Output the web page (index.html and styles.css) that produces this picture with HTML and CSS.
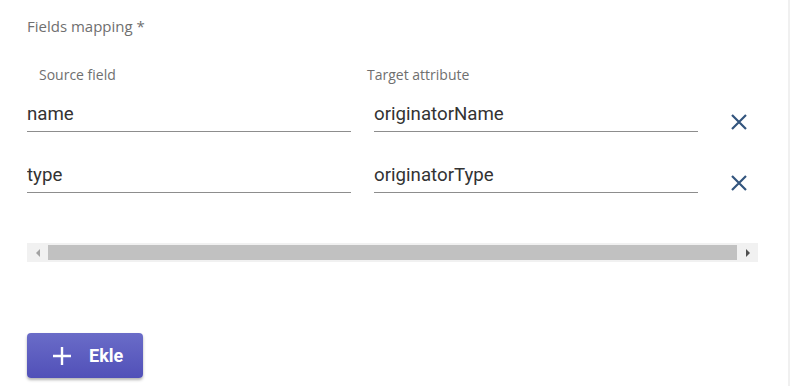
FILE: index.html
```html
<!DOCTYPE html>
<html lang="en">
  <head>
    <meta charset="UTF-8">
    <title>Fields mapping</title>
    <link rel="stylesheet" href="styles.css">
  </head>
  <body>
    <div id="page">
      <div id="form">
        <div class="field-label">Fields mapping *</div>
        <div class="mapping">
          <div class="mapping-head">
            <span class="col-label source">Source field</span>
            <span class="col-label target">Target attribute</span>
          </div>
          <div class="mapping-row">
            <input type="text" class="map-input" value="name">
            <input type="text" class="map-input" value="originatorName">
            <button class="remove" title="Remove">
              <svg width="18" height="18" viewBox="0 0 18 18"><path d="M2 2L16 16M16 2L2 16" stroke="#33557e" stroke-width="2.2" fill="none"/></svg>
            </button>
          </div>
          <div class="mapping-row">
            <input type="text" class="map-input" value="type">
            <input type="text" class="map-input" value="originatorType">
            <button class="remove" title="Remove">
              <svg width="18" height="18" viewBox="0 0 18 18"><path d="M2 2L16 16M16 2L2 16" stroke="#33557e" stroke-width="2.2" fill="none"/></svg>
            </button>
          </div>
        </div>
        <div class="hscroll">
          <span class="arrow left"></span>
          <span class="thumb"></span>
          <span class="arrow right"></span>
        </div>
        <button class="add">
          <svg width="18" height="18" viewBox="0 0 18 18"><path d="M9 0V18M0 9H18" stroke="#fff" stroke-width="2.4" fill="none"/></svg>
          <span>Ekle</span>
        </button>
      </div>
      <div id="edge"></div>
    </div>
  </body>
</html>
```

FILE: styles.css
```css
html, body {
    margin: 0;
    padding: 0;
    background: #fff;
}
#page {
    display: flex;
    height: 386px;
}
#form {
    flex: 1;
    padding: 16px 0 0 27px;
    font-family: "Open Sans", Arial, sans-serif;
}
#edge {
    width: 2px;
    background: #f0f0f0;
}
.field-label {
    font-size: 15px;
    color: #6f6f6f;
    line-height: 20px;
}
.mapping {
    margin-top: 30px;
}
.mapping-head {
    display: grid;
    grid-template-columns: 324px 324px;
    column-gap: 16px;
    font-size: 14px;
    color: #6f6f6f;
    line-height: 18px;
}
.col-label.source {
    padding-left: 12px;
}
.mapping-row {
    display: flex;
    align-items: flex-end;
    margin-top: 19px;
}
.mapping-row + .mapping-row {
    margin-top: 32px;
}
.map-input {
    width: 324px;
    box-sizing: border-box;
    border: none;
    border-bottom: 1px solid #8d8d8d;
    padding: 0 0 6px 0;
    font-family: Roboto, Arial, sans-serif;
    font-size: 18.7px;
    color: #333;
    outline: none;
    background: transparent;
}
.map-input + .map-input {
    margin-left: 23px;
}
.remove {
    margin-left: 32px;
    margin-bottom: 1px;
    padding: 0;
    border: none;
    background: none;
    width: 18px;
    height: 18px;
    cursor: pointer;
}
.remove svg {
    display: block;
}
.hscroll {
    display: flex;
    align-items: center;
    width: 731px;
    height: 19px;
    margin-top: 50px;
    background: #f1f1f1;
}
.thumb {
    flex: 1;
    height: 15px;
    background: #c1c1c1;
}
.arrow {
    width: 21px;
    display: flex;
    justify-content: center;
}
.arrow.left::before {
    content: "";
    border-right: 4px solid #a3a3a3;
    border-top: 4px solid transparent;
    border-bottom: 4px solid transparent;
}
.arrow.right::before {
    content: "";
    border-left: 4px solid #505050;
    border-top: 4px solid transparent;
    border-bottom: 4px solid transparent;
}
.add {
    display: flex;
    align-items: center;
    gap: 18px;
    margin-top: 71px;
    height: 45px;
    padding: 0 20px 0 26px;
    border: none;
    border-radius: 4px;
    background: linear-gradient(#6a6cc8, #5150b8);
    box-shadow: 0 2px 3px rgba(0, 0, 0, 0.3);
    color: #fff;
    font-family: Roboto, Arial, sans-serif;
    font-weight: bold;
    font-size: 18px;
    cursor: pointer;
}
.add svg {
    display: block;
}
```
